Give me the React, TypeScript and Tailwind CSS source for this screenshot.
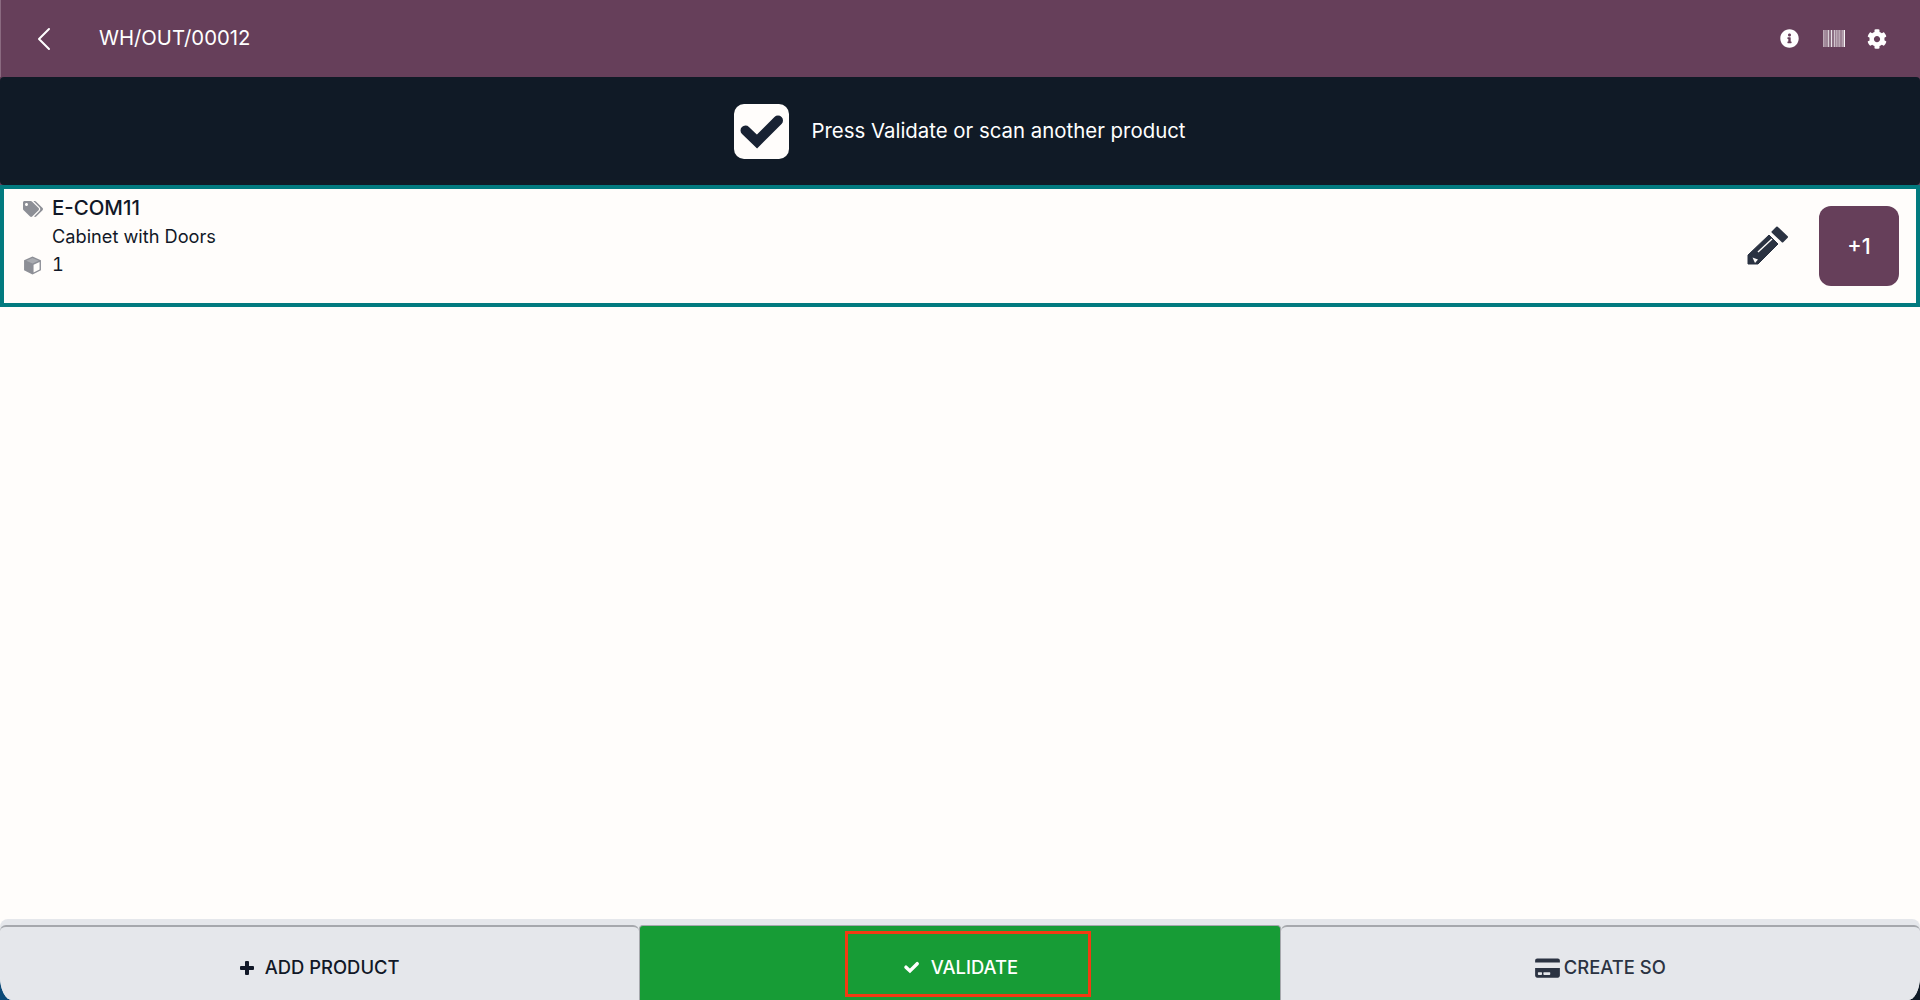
import React from "react";
import { FaCog, FaCreditCard, FaInfoCircle, FaTags } from "react-icons/fa";
import { LuChevronLeft } from "react-icons/lu";

const BARS: [number, number, number][] = [
  [0, 1, 0.55], [1.5, 1, 0.8], [3, 0.8, 0.45], [4.5, 1.5, 0.75], [6.5, 1, 0.5], [8, 1, 0.85],
  [9.5, 1, 0.5], [11, 1.5, 0.7], [13, 1, 0.55], [14.5, 1, 0.85], [16, 1, 0.55], [17.5, 1, 0.7], [19, 1, 0.5], [20.5, 1.5, 0.95],
];

function Check({ className }: { className: string }) {
  return (
    <svg viewBox="0 0 55 55" className={className} fill="none" stroke="currentColor" strokeWidth="10" strokeLinejoin="miter">
      <path d="M11.5 26.5 L23 37.5 L44 16.5" strokeLinecap="round" />
    </svg>
  );
}

export default function App() {
  return (
    <div className="h-[1000px] w-[1920px] overflow-hidden bg-[linear-gradient(90deg,#0b4a78,#0f1a26)] font-['Inter','Liberation_Sans',sans-serif]">
      <div className="flex h-full flex-col overflow-hidden rounded-b-[12px_24px] bg-[#fffdfb]">
        <header className="flex h-[77px] shrink-0 items-center border-l border-[#8a6a80] bg-[#663f5a] pl-[23px] pr-[33px] text-white">
          <LuChevronLeft className="h-[40px] w-[40px]" strokeWidth={1.2} />
          <span className="ml-[35px] text-[20.3px]">WH/OUT/00012</span>
          <div className="ml-auto flex items-center">
            <FaInfoCircle className="h-[19px] w-[19px]" />
            <svg viewBox="0 0 22 17" className="ml-[24px] h-[17px] w-[22px]" fill="white">
              {BARS.map(([x, w, o]) => (
                <rect key={x} x={x} y="0" width={w} height="17" opacity={o} />
              ))}
            </svg>
            <FaCog className="ml-[22px] h-[20px] w-[20px]" />
          </div>
        </header>
        <div className="shrink-0 bg-[#663f5a]">
          <section className="flex h-[108px] items-center justify-center gap-[22px] rounded-[4px] bg-[#101a26] text-white">
            <span className="flex h-[55px] w-[55px] items-center justify-center rounded-[10px] bg-[#fffdfb]">
              <Check className="h-[55px] w-[55px] text-[#182233]" />
            </span>
            <span className="text-[20.4px]">Press Validate or scan another product</span>
          </section>
        </div>
        <section className="flex h-[122px] shrink-0 items-center border-[4px] border-[#027a7f] bg-[#fffdfb] pl-[19px] pr-[17px] text-[#111827]">
          <div className="flex flex-col self-start pt-[5px]">
            <div className="flex h-[29px] items-center gap-[9px]">
              <FaTags className="h-[20px] w-[20px] text-[#8d8f96]" />
              <span className="text-[20.4px] font-medium leading-none">E-COM11</span>
            </div>
            <div className="ml-[29px] flex h-[28px] items-center text-[18.2px]">Cabinet with Doors</div>
            <div className="flex h-[28px] items-center gap-[10px]">
              <svg viewBox="0 0 18 18" className="h-[19px] w-[19px]">
                <path d="M9 .5 17 4v9.5L9 17.5 1 13.5V4z" fill="#8d8f96" />
                <path d="M10 8.3 15.7 5.6v7.1L10 15.6z" fill="#fffdfb" />
                <path d="M3 4.4 9 1.9l6 2.5-6 2.7z" fill="#a9abb0" />
              </svg>
              <span className="text-[18.2px] tabular-nums">1</span>
            </div>
          </div>
          <svg viewBox="0 0 60 60" className="ml-auto h-[60px] w-[60px] text-[#2b3342]">
            <path d="M7 48V39L28 19 37 28 17 48z" fill="currentColor" stroke="currentColor" strokeWidth="1" strokeLinejoin="round" />
            <path d="M31.5 16 36 11.5 46 21 41.5 25.5z" fill="currentColor" stroke="currentColor" strokeWidth="2" strokeLinejoin="round" />
            <path d="M17 36 31 23" stroke="#fffdfb" strokeWidth="1.4" />
            <path d="M11.5 41.5 17 43.5 14 47z" fill="#fffdfb" />
          </svg>
          <button className="ml-[18px] flex h-[80px] w-[80px] items-center justify-center rounded-[12px] bg-[#663f5a] text-[21.5px] font-medium text-white">+1</button>
        </section>
        <div className="flex-1" />
        <footer className="relative flex h-[81px] shrink-0 items-stretch rounded-t-[8px] bg-[#e5e7eb] pt-[6px] text-[18.4px] font-medium">
          <button className="flex flex-1 items-center justify-center gap-[11px] rounded-t-[6px] border-t-2 border-[#a6a8ad] pt-[8px] text-[#111827]">
            <svg viewBox="0 0 14 14" className="h-[14px] w-[14px]" fill="currentColor">
              <path d="M5 1a1 1 0 0 1 1-1h2a1 1 0 0 1 1 1v4h4a1 1 0 0 1 1 1v2a1 1 0 0 1-1 1H9v4a1 1 0 0 1-1 1H6a1 1 0 0 1-1-1V9H1a1 1 0 0 1-1-1V6a1 1 0 0 1 1-1h4z" />
            </svg>
            ADD PRODUCT
          </button>
          <button className="flex flex-1 items-center justify-center gap-[10px] rounded-t-[4px] border-x border-t border-[#a6a8ad] bg-[#179c36] pt-[9px] text-white">
            <Check className="h-[19px] w-[19px]" />
            VALIDATE
          </button>
          <button className="flex flex-1 items-center justify-center gap-[4px] rounded-t-[6px] border-t-2 border-[#a6a8ad] pt-[8px] text-[#2b3342]">
            <FaCreditCard className="h-[22px] w-[25px]" />
            CREATE SO
          </button>
          <div className="absolute left-[845px] top-[12px] h-[66px] w-[246px] border-[3px] border-[#f23a12]" />
        </footer>
      </div>
    </div>
  );
}
